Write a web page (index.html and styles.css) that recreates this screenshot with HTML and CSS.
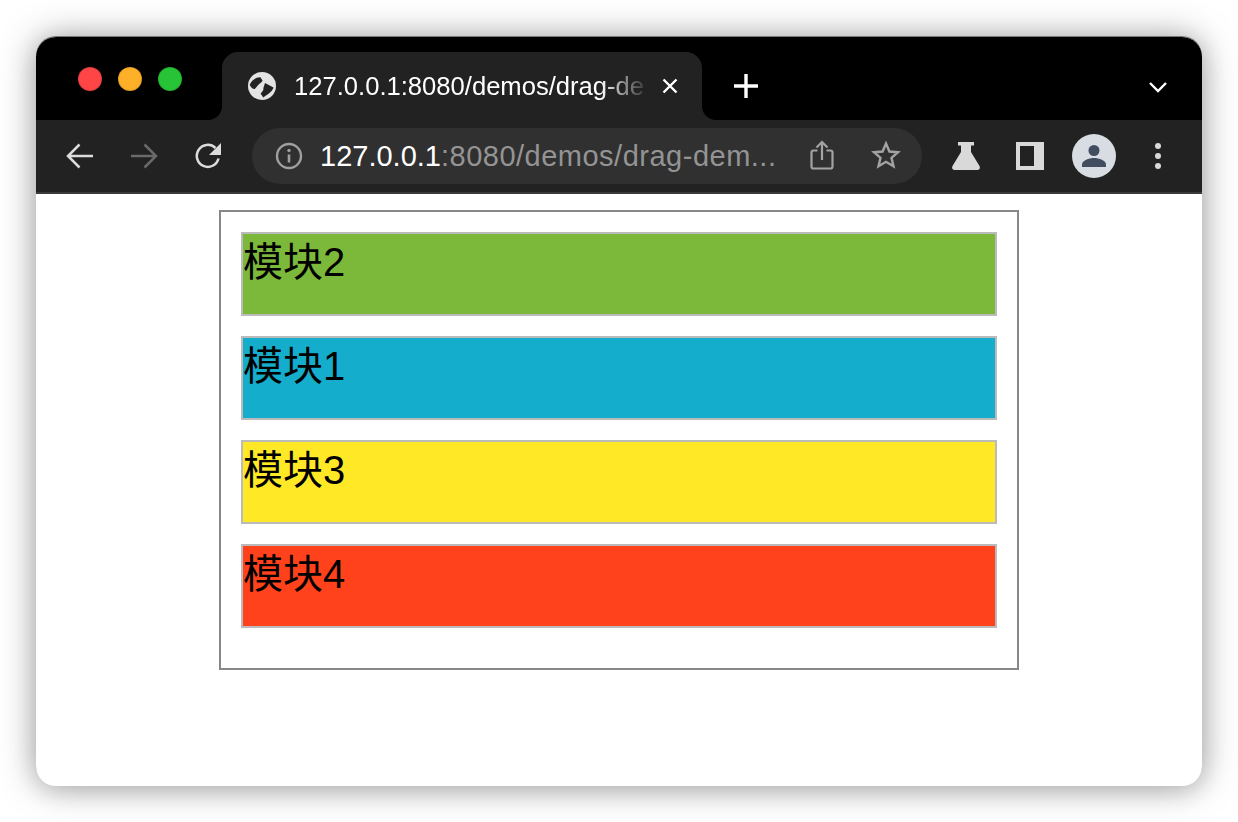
FILE: index.html
```html
<!DOCTYPE html>
<html lang="zh">
<head>
<meta charset="utf-8">
<title>drag demo</title>
<link rel="stylesheet" href="styles.css">
</head>
<body>
<div class="window">
  <div class="tabstrip">
    <div class="lights">
      <span class="light red"></span>
      <span class="light yellow"></span>
      <span class="light green"></span>
    </div>
    <div class="tab">
      <svg class="globe" width="30" height="30" viewBox="0 0 30 30">
        <circle cx="15" cy="15" r="14" fill="#e3e3e3"/>
        <path d="M2.700 14C4 10 9 6 13.600 6.400L15.600 9.800C14 12 12 13 11.200 14L7.800 18C5 18 4 16 2.700 14zM18 12L26.500 16.600C25.500 20 23 22 16.300 26.500L13.600 22.400C15 21 17 19 16.300 17.300z" fill="#222"/>
      </svg>
      <span class="tab-title">127.0.0.1:8080/demos/drag-de</span>
      <svg class="tab-close" width="16" height="16" viewBox="0 0 16 16">
        <path d="M1.500 1.500l13 13M14.500 1.500l-13 13" stroke="#fff" stroke-width="2.400" fill="none"/>
      </svg>
    </div>
    <svg class="newtab" width="24" height="24" viewBox="0 0 24 24">
      <path d="M12 0.500v23M0.500 12h23" stroke="#fff" stroke-width="3.400" stroke-linecap="round" fill="none"/>
    </svg>
    <svg class="tablist" width="20" height="12" viewBox="0 0 20 12">
      <path d="M2 2l8 8 8-8" stroke="#fff" stroke-width="2.400" fill="none"/>
    </svg>
  </div>
  <div class="toolbar">
    <svg class="nav" width="28" height="26" viewBox="0 0 28 26">
      <path d="M27 13H2M13.500 1.500L2 13l11.500 11.500" stroke="#dcdcdc" stroke-width="2.500" fill="none"/>
    </svg>
    <svg class="nav" width="28" height="26" viewBox="0 0 28 26">
      <path d="M1 13h25M14.500 1.500L26 13 14.500 24.500" stroke="#6a6a6a" stroke-width="2.500" fill="none"/>
    </svg>
    <svg class="nav" width="28" height="28" viewBox="0 0 28 28">
      <path d="M24.500 16.500A11 11 0 1 1 21.500 6" stroke="#dcdcdc" stroke-width="2.500" fill="none"/>
      <path d="M27 1v12H15z" fill="#dcdcdc"/>
    </svg>
    <div class="omnibox">
      <svg class="info" width="28" height="28" viewBox="0 0 28 28">
        <circle cx="14" cy="14" r="12" stroke="#a0a0a0" stroke-width="2.400" fill="none"/>
        <path d="M14 12.500v8" stroke="#a0a0a0" stroke-width="2.600"/>
        <circle cx="14" cy="8.500" r="1.700" fill="#a0a0a0"/>
      </svg>
      <span class="url"><span class="host">127.0.0.1</span>:8080/demos/drag-dem...</span>
      <svg class="share" width="24" height="30" viewBox="0 0 24 30">
        <path d="M7.500 10.500H3.500a2 2 0 0 0-2 2V26.500a2 2 0 0 0 2 2h17a2 2 0 0 0 2-2V12.500a2 2 0 0 0-2-2h-4" stroke="#a3a3a3" stroke-width="2.200" fill="none"/>
        <path d="M12 20V2M6.500 7.500L12 2l5.500 5.500" stroke="#a3a3a3" stroke-width="2.200" fill="none"/>
      </svg>
      <svg class="star" width="30" height="30" viewBox="0 0 30 30">
        <path d="M15 3.500l3.400 8 8.600.7-6.500 5.700 2 8.400L15 21.800l-7.500 4.500 2-8.400L3 12.200l8.600-.7z" stroke="#a3a3a3" stroke-width="2.400" stroke-linejoin="miter" fill="none"/>
      </svg>
    </div>
    <div class="actions">
      <svg class="lab" width="28" height="28" viewBox="0 0 28 28">
        <path d="M6 0h16v3.500h-3v6.500l8.500 14c1 2 0 4-2 4H2.500c-2 0-3-2-2-4L9 10V3.500H6z" fill="#d9d9d9"/>
      </svg>
      <svg class="panel" width="28" height="28" viewBox="0 0 28 28">
        <path fill-rule="evenodd" d="M0 0h28v28H0zM4 4v20h14V4z" fill="#d9d9d9"/>
      </svg>
      <svg class="avatar" width="44" height="44" viewBox="0 0 44 44">
        <circle cx="22" cy="22" r="22" fill="#d8dce3"/>
        <circle cx="22" cy="16.500" r="5.500" fill="#434d60"/>
        <path d="M10 33v-2.500c0-4 7-6.500 12-6.500s12 2.500 12 6.500V33z" fill="#434d60"/>
      </svg>
      <svg class="menu" width="8" height="28" viewBox="0 0 8 28">
        <circle cx="4" cy="4" r="3" fill="#d9d9d9"/>
        <circle cx="4" cy="14" r="3" fill="#d9d9d9"/>
        <circle cx="4" cy="24" r="3" fill="#d9d9d9"/>
      </svg>
    </div>
  </div>
  <main class="page">
    <div class="container">
      <div class="module green">模块2</div>
      <div class="module blue">模块1</div>
      <div class="module yellow">模块3</div>
      <div class="module orange">模块4</div>
    </div>
  </main>
</div>
</body>
</html>
```
FILE: styles.css
```css
* { box-sizing: border-box; }
html, body { margin: 0; height: 100%; background: #fff; overflow: hidden; }
body { padding: 37px 36px 36px; }

.window {
  height: 749px;
  display: flex;
  flex-direction: column;
  border-radius: 20px;
  background: #fff;
  box-shadow: 0 -1px 0 #777, 0 0 36px rgba(0, 0, 0, .34), 0 4px 24px rgba(0, 0, 0, .12);
}

.tabstrip {
  height: 83px;
  flex: none;
  display: flex;
  align-items: flex-end;
  background: #000;
  border-radius: 20px 20px 0 0;
}

.lights {
  display: flex;
  gap: 16px;
  align-self: flex-start;
  margin: 30px 0 0 42px;
  width: 144px;
}
.light { width: 24px; height: 24px; border-radius: 50%; border: 1px solid rgba(0, 0, 0, .12); }
.light.red { background: #ff4545; }
.light.yellow { background: #ffb029; }
.light.green { background: #28c438; }

.tab {
  position: relative;
  width: 480px;
  height: 68px;
  background: #222;
  border-radius: 16px 16px 0 0;
  display: flex;
  align-items: center;
  padding: 0 22px 0 25px;
}
.tab::before, .tab::after {
  content: "";
  position: absolute;
  bottom: 0;
  width: 14px;
  height: 14px;
}
.tab::before { left: -14px; background: radial-gradient(circle at 0 0, #000 13.500px, #222 14.500px); }
.tab::after { right: -14px; background: radial-gradient(circle at 100% 0, #000 13.500px, #222 14.500px); }

.globe { flex: none; }
.tab-title {
  margin-left: 17px;
  width: 350px;
  flex: none;
  white-space: nowrap;
  font: 25.600px/36px "Liberation Sans", Inter, sans-serif;
  color: #fff;
  -webkit-mask-image: linear-gradient(to right, #000 306px, rgba(0, 0, 0, .12) 350px);
  mask-image: linear-gradient(to right, #000 306px, rgba(0, 0, 0, .12) 350px);
}
.tab-close { flex: none; margin-left: 18px; }

.newtab { flex: none; align-self: flex-start; margin: 37px 0 0 32px; }
.tablist { flex: none; align-self: flex-start; margin: 44px 0 0 390px; }

.toolbar {
  height: 74px;
  flex: none;
  display: flex;
  align-items: center;
  background: #222;
  border-bottom: 2px solid #3a3a3a;
  padding: 0 0 0 30px;
}
.nav { flex: none; margin-right: 36px; margin-top: -1px; }
.nav:nth-child(3) { margin-right: 30px; }

.omnibox {
  width: 670px;
  height: 56px;
  flex: none;
  display: flex;
  align-items: center;
  background: #303030;
  border-radius: 28px;
  padding-left: 23px;
}
.info { flex: none; }
.url {
  flex: none;
  width: 460px;
  margin-left: 17px;
  white-space: nowrap;
  font: 29px/40px "Liberation Sans", Inter, sans-serif;
  letter-spacing: .5px;
  color: #949494;
}
.host { color: #fff; letter-spacing: 0; }
.share { flex: none; margin: -2px 0 0 30px; }
.star { flex: none; margin: -2px 0 0 37px; }

.actions { display: flex; align-items: center; margin-left: 30px; }
.lab { flex: none; }
.panel { flex: none; margin-left: 36px; }
.avatar { flex: none; margin-left: 28px; }
.menu { flex: none; margin-left: 38px; }

.page { flex: 1; display: flex; justify-content: center; align-items: flex-start; padding-top: 16px; border-radius: 0 0 20px 20px; }

.container {
  width: 800px;
  height: 460px;
  border: 2px solid #888;
  padding: 20px;
  display: flex;
  flex-direction: column;
  gap: 20px;
}
.module {
  height: 84px;
  border: 2px solid #bbb;
  font: 40px/56px "Liberation Sans", "Noto Sans CJK SC", sans-serif;
  color: #000;
}
.module.green { background: #7cb93b; }
.module.blue { background: #14adcb; }
.module.yellow { background: #ffe926; }
.module.orange { background: #ff411c; }
```
